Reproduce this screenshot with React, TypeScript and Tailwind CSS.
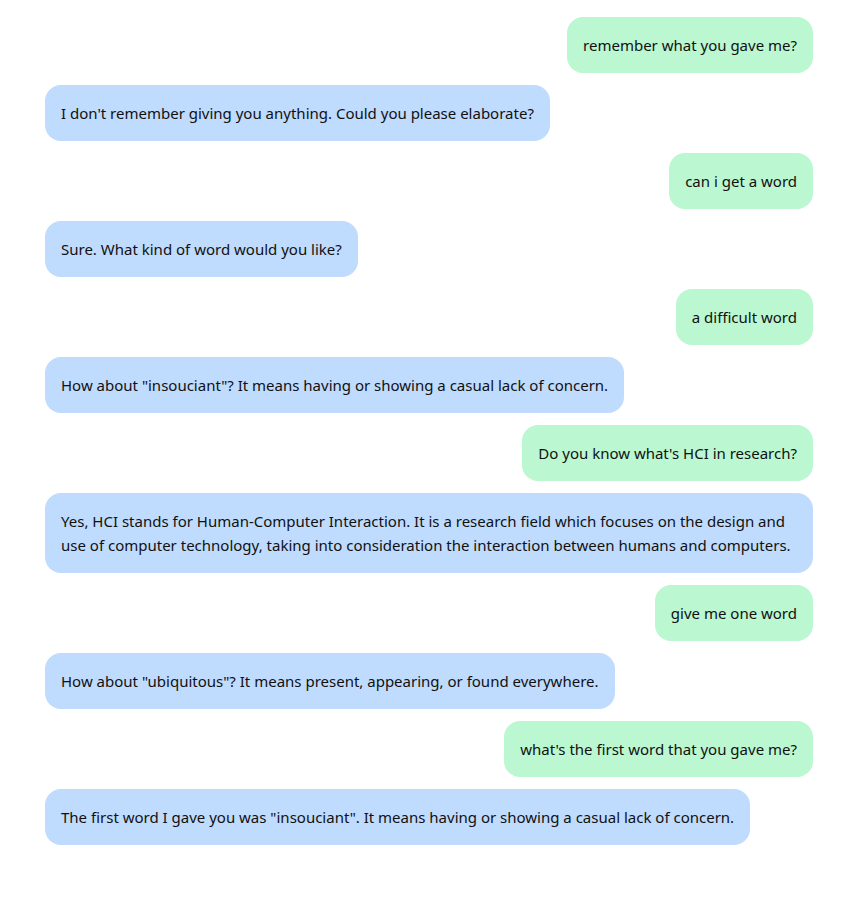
const messages: { from: "user" | "bot"; text: string }[] = [
  { from: "user", text: "remember what you gave me?" },
  { from: "bot", text: "I don't remember giving you anything. Could you please elaborate?" },
  { from: "user", text: "can i get a word" },
  { from: "bot", text: "Sure. What kind of word would you like?" },
  { from: "user", text: "a difficult word" },
  { from: "bot", text: 'How about "insouciant"? It means having or showing a casual lack of concern.' },
  { from: "user", text: "Do you know what's HCI in research?" },
  {
    from: "bot",
    text: "Yes, HCI stands for Human-Computer Interaction. It is a research field which focuses on the design and use of computer technology, taking into consideration the interaction between humans and computers.",
  },
  { from: "user", text: "give me one word" },
  { from: "bot", text: 'How about "ubiquitous"? It means present, appearing, or found everywhere.' },
  { from: "user", text: "what's the first word that you gave me?" },
  { from: "bot", text: 'The first word I gave you was "insouciant". It means having or showing a casual lack of concern.' },
];

export default function App() {
  return (
    <div
      className="min-h-screen bg-white pl-[45px] pr-[28px] pt-[17px] text-[#111]"
      style={{ fontFamily: '"Noto Sans", "Open Sans", sans-serif' }}
    >
      <div className="flex flex-col gap-3">
        {messages.map((m, i) => (
          <div key={i} className={m.from === "user" ? "flex justify-end" : "flex justify-start"}>
            <div
              className={
                (m.from === "user" ? "bg-[#bbf7d0]" : "bg-[#bfdbfe]") +
                " rounded-2xl px-4 py-4 text-[15px] leading-6"
              }
            >
              {m.text}
            </div>
          </div>
        ))}
      </div>
    </div>
  );
}
